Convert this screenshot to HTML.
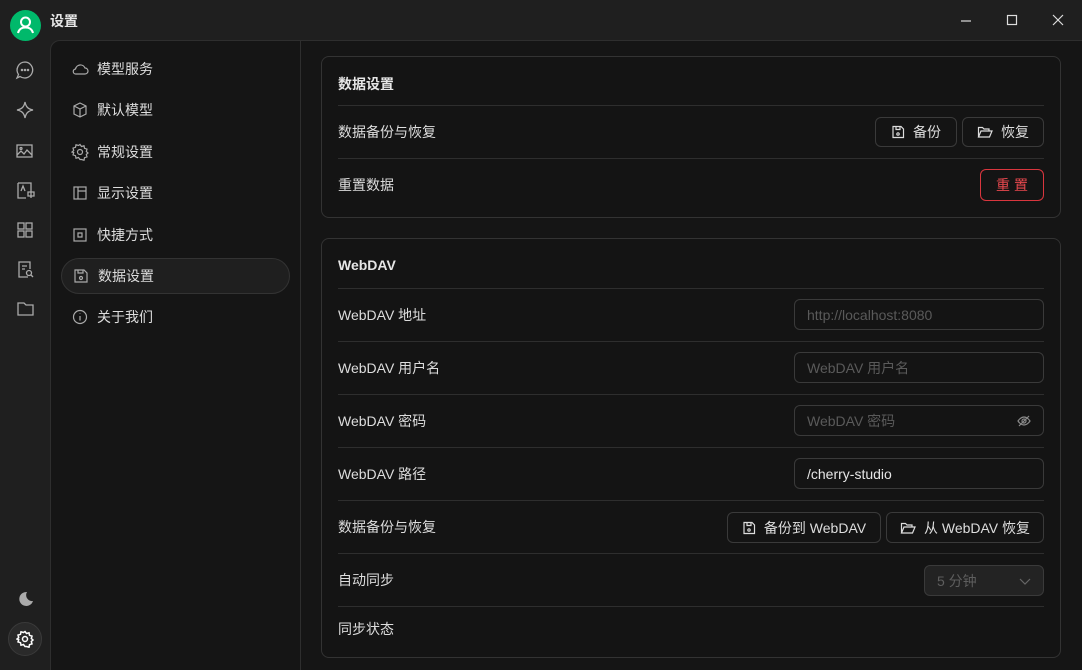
<!DOCTYPE html>
<html><head><meta charset="utf-8"><style>
*{box-sizing:border-box;margin:0;padding:0}
body{width:1082px;height:670px;background:#1f1f1f;font-family:"Liberation Sans","Noto Sans CJK SC",sans-serif;color:#e6e6e6;font-size:14px;position:relative;overflow:hidden}
.abs{position:absolute}
.title{left:50px;top:11px;font-weight:bold;font-size:14px}
.avatar{left:10px;top:10px;width:31px;height:31px;border-radius:50%;background:#00b96b}
.main{left:50px;top:40px;width:1032px;height:630px;background:#151515;border-top-left-radius:10px;border-left:1px solid #2e2e2e;border-top:1px solid #2e2e2e}
.side{left:300px;top:40px;width:1px;height:630px;background:#2e2e2e}
.mi{position:absolute;left:61px;width:229px;height:36px;display:flex;align-items:center;padding-left:10px;font-size:14px;color:#ddd}
.mi svg{margin-right:8px}
.mi.act{background:#1f1f1f;border:1px solid #333;border-radius:18px}
.card{position:absolute;left:321px;width:740px;border:1px solid #333;border-radius:8px;background:#141414}
.ct{position:absolute;left:16px;font-weight:bold;font-size:14px}
.dv{position:absolute;left:16px;right:16px;height:1px;background:#2e2e2e}
.lb{position:absolute;left:16px;font-size:14px;color:#ddd}
.btn{position:absolute;height:30px;border:1px solid #3a3a3a;border-radius:6px;display:flex;align-items:center;justify-content:center;font-size:14px;color:#ddd;gap:8px}
.inp{position:absolute;left:472px;width:250px;height:31px;border:1px solid #3a3a3a;border-radius:6px;padding-left:12px;display:flex;align-items:center;font-size:14px;color:#5a5a5a}
</style></head><body>
<div class="abs avatar"><svg width="31" height="31" viewBox="0 0 31 31" fill="none" stroke="#fff" stroke-width="2"><circle cx="15.5" cy="12" r="4.5"/><path d="M8 23c1-4 4-5.5 7.5-5.5S22 19 23 23"/></svg></div>
<div class="abs title">设置</div>
<svg class="abs" style="left:958px;top:14px" width="110" height="14" fill="none" stroke="#ddd" stroke-width="1.2"><path d="M3 7h10"/><rect x="49.5" y="1.5" width="9" height="9"/><path d="M95 1l10 10M105 1L95 11"/></svg>
<svg class="abs" style="left:15px;top:60px" width="22" height="270" fill="none" stroke="#aaa" stroke-width="1.3">
<path d="M10 2a8 8 0 1 1-5 14.5L2 18l1.5-3.5A8 8 0 0 1 10 2z"/><circle cx="7" cy="10" r=".6"/><circle cx="10" cy="10" r=".6"/><circle cx="13" cy="10" r=".6"/>
<path d="M10 42c1 5 3 7 8 8-5 1-7 3-8 8-1-5-3-7-8-8 5-1 7-3 8-8z"/>
<rect x="2" y="85" width="15" height="12"/><path d="M2 95l4-4 3 3 3-4 5 5"/><circle cx="6" cy="88.5" r="1"/>
<path d="M3 123h13v7M3 123v15h8"/><path d="M6 131l2-5 2 5M13 132h6v4h-6zM16 130v8"/>
<rect x="3" y="163" width="6" height="6"/><rect x="11" y="163" width="6" height="6"/><rect x="3" y="171" width="6" height="6"/><rect x="11" y="171" width="6" height="6"/>
<path d="M13 217H4v-15h11v7M7 206h5M7 209h3"/><circle cx="14" cy="213" r="2.5"/><path d="M16 215l2 2"/>
<path d="M3 243h6l2 2h7v10H3z"/>
</svg>
<svg class="abs" style="left:15px;top:589px" width="20" height="20"><path d="M12 3a7 7 0 1 0 6 9A6 6 0 0 1 12 3z" fill="#aaa"/></svg>
<div class="abs" style="left:8px;top:622px;width:34px;height:34px;border-radius:50%;background:#2a2a2a;border:1px solid #3a3a3a"></div>
<svg class="abs" style="left:16px;top:630px" width="18" height="18" fill="none" stroke="#fff" stroke-width="1.5"><circle cx="9" cy="9" r="2.5"/><path d="M9 1.5l1.5 2 2.5-.7.5 2.5 2.5.8-.7 2.4 1.7 1.5-1.7 1.5.7 2.4-2.5.8-.5 2.5-2.5-.7L9 16.5l-1.5-2-2.5.7-.5-2.5-2.5-.8.7-2.4L1 9l1.7-1.5L2 5.1l2.5-.8.5-2.5 2.5.7z"/></svg>
<div class="abs main"></div>
<div class="abs side"></div>
<div class="mi" style="top:51px"><svg width="18" height="18" fill="none" stroke="#aaa" stroke-width="1.2"><path d="M5 14h9a3 3 0 0 0 0-6 5 5 0 0 0-9.5 1A2.5 2.5 0 0 0 5 14z"/></svg>模型服务</div>
<div class="mi" style="top:92px"><svg width="18" height="18" fill="none" stroke="#aaa" stroke-width="1.2"><path d="M9 2l6 3v8l-6 3-6-3V5zM3 5l6 3 6-3M9 8v8"/></svg>默认模型</div>
<div class="mi" style="top:134px"><svg width="18" height="18" fill="none" stroke="#aaa" stroke-width="1.2"><circle cx="9" cy="9" r="2.5"/><path d="M9 1.5l1.5 2 2.5-.7.5 2.5 2.5.8-.7 2.4 1.7 1.5-1.7 1.5.7 2.4-2.5.8-.5 2.5-2.5-.7L9 16.5l-1.5-2-2.5.7-.5-2.5-2.5-.8.7-2.4L1 9l1.7-1.5L2 5.1l2.5-.8.5-2.5 2.5.7z"/></svg>常规设置</div>
<div class="mi" style="top:175px"><svg width="18" height="18" fill="none" stroke="#aaa" stroke-width="1.2"><rect x="3" y="3" width="12" height="12"/><path d="M7 3v12M7 7h8"/></svg>显示设置</div>
<div class="mi" style="top:217px"><svg width="18" height="18" fill="none" stroke="#aaa" stroke-width="1.2"><rect x="3" y="3" width="12" height="12"/><path d="M7 7h4v4H7z"/></svg>快捷方式</div>
<div class="mi act" style="top:258px"><svg width="18" height="18" fill="none" stroke="#aaa" stroke-width="1.2"><path d="M3 3h9l3 3v9H3z"/><path d="M6 3v3h5V3"/><circle cx="9" cy="11" r="1.5"/></svg>数据设置</div>
<div class="mi" style="top:299px"><svg width="18" height="18" fill="none" stroke="#aaa" stroke-width="1.2"><circle cx="9" cy="9" r="6.5"/><path d="M9 8v4.5M9 5.5v.5"/></svg>关于我们</div>
<div class="card" style="top:56px;height:162px">
<div class="ct" style="top:17px">数据设置</div>
<div class="dv" style="top:48px"></div>
<div class="lb" style="top:65px">数据备份与恢复</div>
<div class="btn" style="left:553px;top:60px;width:82px"><svg width="14" height="14" fill="none" stroke="#ddd" stroke-width="1.2"><path d="M2 1.5h8l2.5 2.5v8.5H2z"/><path d="M5 1.5v3h4v-3"/><circle cx="7" cy="9" r="1.2"/></svg>备份</div>
<div class="btn" style="left:640px;top:60px;width:82px"><svg width="16" height="14" fill="none" stroke="#ddd" stroke-width="1.2"><path d="M1.5 12V2.5h4l1.5 1.5h5v2M1.5 12l2.5-6h11l-2.5 6z"/></svg>恢复</div>
<div class="dv" style="top:101px"></div>
<div class="lb" style="top:118px">重置数据</div>
<div class="btn" style="left:658px;top:112px;width:64px;height:32px;border-color:#d9363e;color:#e8484e;letter-spacing:4px;padding-left:4px">重置</div>
</div>
<div class="card" style="top:238px;height:420px">
<div class="ct" style="top:18px">WebDAV</div>
<div class="dv" style="top:49px"></div>
<div class="lb" style="top:66px">WebDAV 地址</div>
<div class="inp" style="top:60px">http://localhost:8080</div>
<div class="dv" style="top:102px"></div>
<div class="lb" style="top:119px">WebDAV 用户名</div>
<div class="inp" style="top:113px">WebDAV 用户名</div>
<div class="dv" style="top:155px"></div>
<div class="lb" style="top:172px">WebDAV 密码</div>
<div class="inp" style="top:166px">WebDAV 密码<svg style="position:absolute;right:12px;top:8px" width="14" height="14" fill="none" stroke="#888" stroke-width="1.2"><path d="M1 7s2.5-4 6-4 6 4 6 4-2.5 4-6 4-6-4-6-4z"/><circle cx="7" cy="7" r="2"/><path d="M2 12L12 2"/></svg></div>
<div class="dv" style="top:208px"></div>
<div class="lb" style="top:225px">WebDAV 路径</div>
<div class="inp" style="top:219px;color:#e6e6e6">/cherry-studio</div>
<div class="dv" style="top:261px"></div>
<div class="lb" style="top:278px">数据备份与恢复</div>
<div class="btn" style="left:405px;top:273px;width:154px;height:31px"><svg width="14" height="14" fill="none" stroke="#ddd" stroke-width="1.2"><path d="M2 1.5h8l2.5 2.5v8.5H2z"/><path d="M5 1.5v3h4v-3"/><circle cx="7" cy="9" r="1.2"/></svg>备份到 WebDAV</div>
<div class="btn" style="left:564px;top:273px;width:158px;height:31px"><svg width="16" height="14" fill="none" stroke="#ddd" stroke-width="1.2"><path d="M1.5 12V2.5h4l1.5 1.5h5v2M1.5 12l2.5-6h11l-2.5 6z"/></svg>从 WebDAV 恢复</div>
<div class="dv" style="top:314px"></div>
<div class="lb" style="top:331px">自动同步</div>
<div class="inp" style="left:602px;width:120px;top:326px;background:#232323;color:#5e5e5e">5 分钟<svg style="position:absolute;right:12px;top:10px" width="12" height="10" fill="none" stroke="#666" stroke-width="1.2"><path d="M1 3l5 5 5-5"/></svg></div>
<div class="dv" style="top:367px"></div>
<div class="lb" style="top:380px">同步状态</div>
</div>
</body></html>
